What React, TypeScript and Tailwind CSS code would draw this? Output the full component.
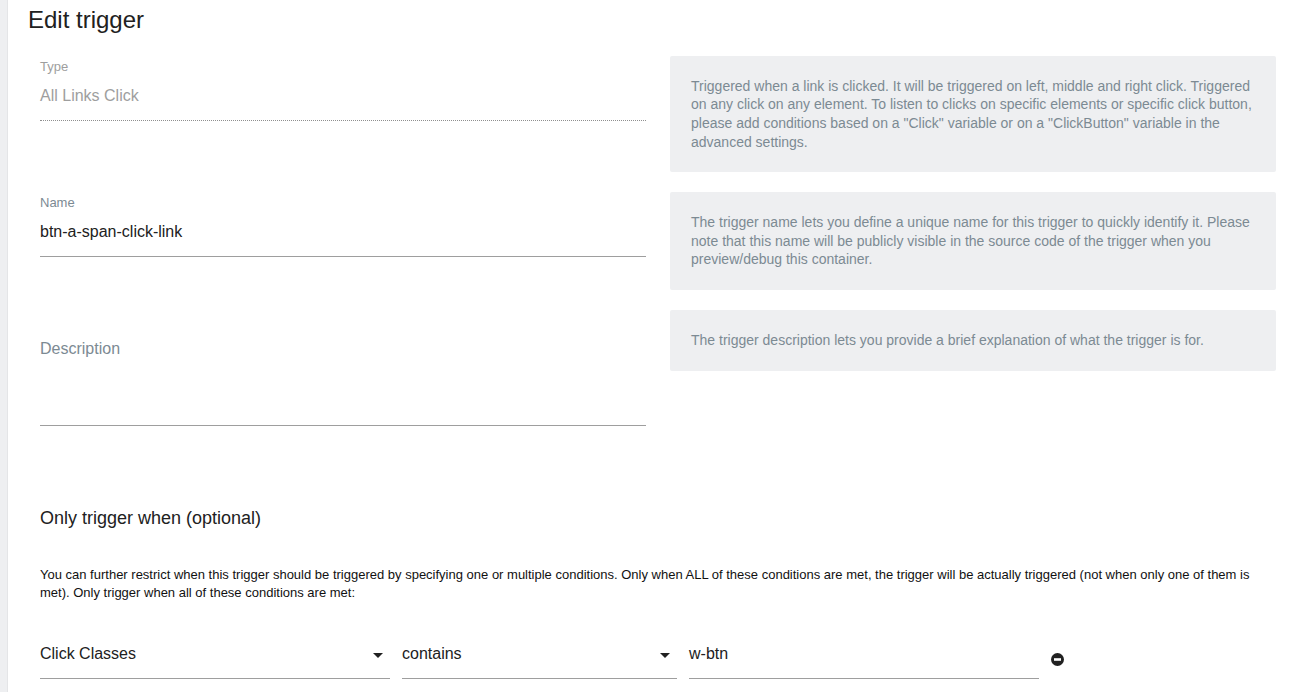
import React from "react";

function HelpBox({ text, className }: { text: string; className: string }) {
  return (
    <div className={`rounded-[2px] bg-[#eeeff1] px-[21px] text-[14px] leading-[18.667px] text-[#7c8a93] ${className}`}>
      {text}
    </div>
  );
}

function Caret({ className }: { className: string }) {
  return (
    <span className={`absolute h-0 w-0 border-x-[5px] border-t-[5px] border-x-transparent border-t-[#212121] ${className}`} />
  );
}

export default function App() {
  return (
    <div className="flex h-[692px] overflow-hidden bg-white font-['Liberation_Sans',Arial,sans-serif] text-[#212121]">
      <div className="w-[8px] shrink-0 border-r border-[#e4e5e7] bg-[#eeeff1]" />

      <div className="min-w-0 flex-1">
        <h1 className="pl-[20px] pt-[5px] text-[24px] leading-[30px] text-[#212121]">Edit trigger</h1>

        <div className="mt-[21px] flex flex-col gap-[20px] pl-[32px]">
          <div className="flex gap-[24px]">
            <div className="w-[606px]">
              <div className="h-[65px] border-b border-dotted border-[#8f8f8f]">
                <div className="pt-[4px] text-[13px] leading-[14px] text-[#9e9e9e]">Type</div>
                <div className="mt-[12px] text-[16px] leading-[20px] text-[#9e9e9e]">All Links Click</div>
              </div>
            </div>
            <HelpBox
              className="h-[116px] w-[606px] pt-[20.7px]"
              text={'Triggered when a link is clicked. It will be triggered on left, middle and right click. Triggered on any click on any element. To listen to clicks on specific elements or specific click button, please add conditions based on a "Click" variable or on a "ClickButton" variable in the advanced settings.'}
            />
          </div>

          <div className="flex gap-[24px]">
            <div className="w-[606px]">
              <div className="h-[65px] border-b border-[#9e9e9e]">
                <div className="pt-[4px] text-[13px] leading-[14px] text-[#7c8a93]">Name</div>
                <div className="mt-[12px] text-[16px] leading-[20px]">btn-a-span-click-link</div>
              </div>
            </div>
            <HelpBox
              className="h-[98px] w-[606px] pt-[21px]"
              text="The trigger name lets you define a unique name for this trigger to quickly identify it. Please note that this name will be publicly visible in the source code of the trigger when you preview/debug this container."
            />
          </div>

          <div className="flex gap-[24px]">
            <div className="h-[116px] w-[606px] border-b border-[#9e9e9e] pt-[29px] text-[16px] leading-[20px] text-[#7c8a93]">
              Description
            </div>
            <HelpBox
              className="h-[61px] w-[606px] pt-[21px]"
              text="The trigger description lets you provide a brief explanation of what the trigger is for."
            />
          </div>
        </div>

        <div className="pl-[32px] pr-[30px]">
          <h2 className="mt-[81px] text-[18px] leading-[22px]">Only trigger when (optional)</h2>
          <p className="mt-[37px] text-[13px] leading-[18px] text-[#111111]">
            You can further restrict when this trigger should be triggered by specifying one or multiple conditions. Only when ALL of these conditions are met, the trigger will be actually triggered (not when only one of them is met). Only trigger when all of these conditions are met:
          </p>

          <div className="mt-[34px] flex items-start gap-[12px] text-[16px] leading-[20px]">
            <div className="relative h-[43px] w-[350px] border-b border-[#9e9e9e] pt-[8px]">
              Click Classes
              <Caret className="right-[7px] top-[17px]" />
            </div>
            <div className="relative h-[43px] w-[275px] border-b border-[#9e9e9e] pt-[8px]">
              contains
              <Caret className="right-[7px] top-[17px]" />
            </div>
            <div className="h-[43px] w-[350px] border-b border-[#9e9e9e] pt-[8px]">w-btn</div>
            <svg className="mt-[17px] shrink-0" width="13" height="13" viewBox="0 0 13 13">
              <circle cx="6.5" cy="6.5" r="6.5" fill="#212121" />
              <rect x="3" y="5.2" width="7" height="2.6" fill="#ffffff" />
            </svg>
          </div>
        </div>
      </div>
    </div>
  );
}
